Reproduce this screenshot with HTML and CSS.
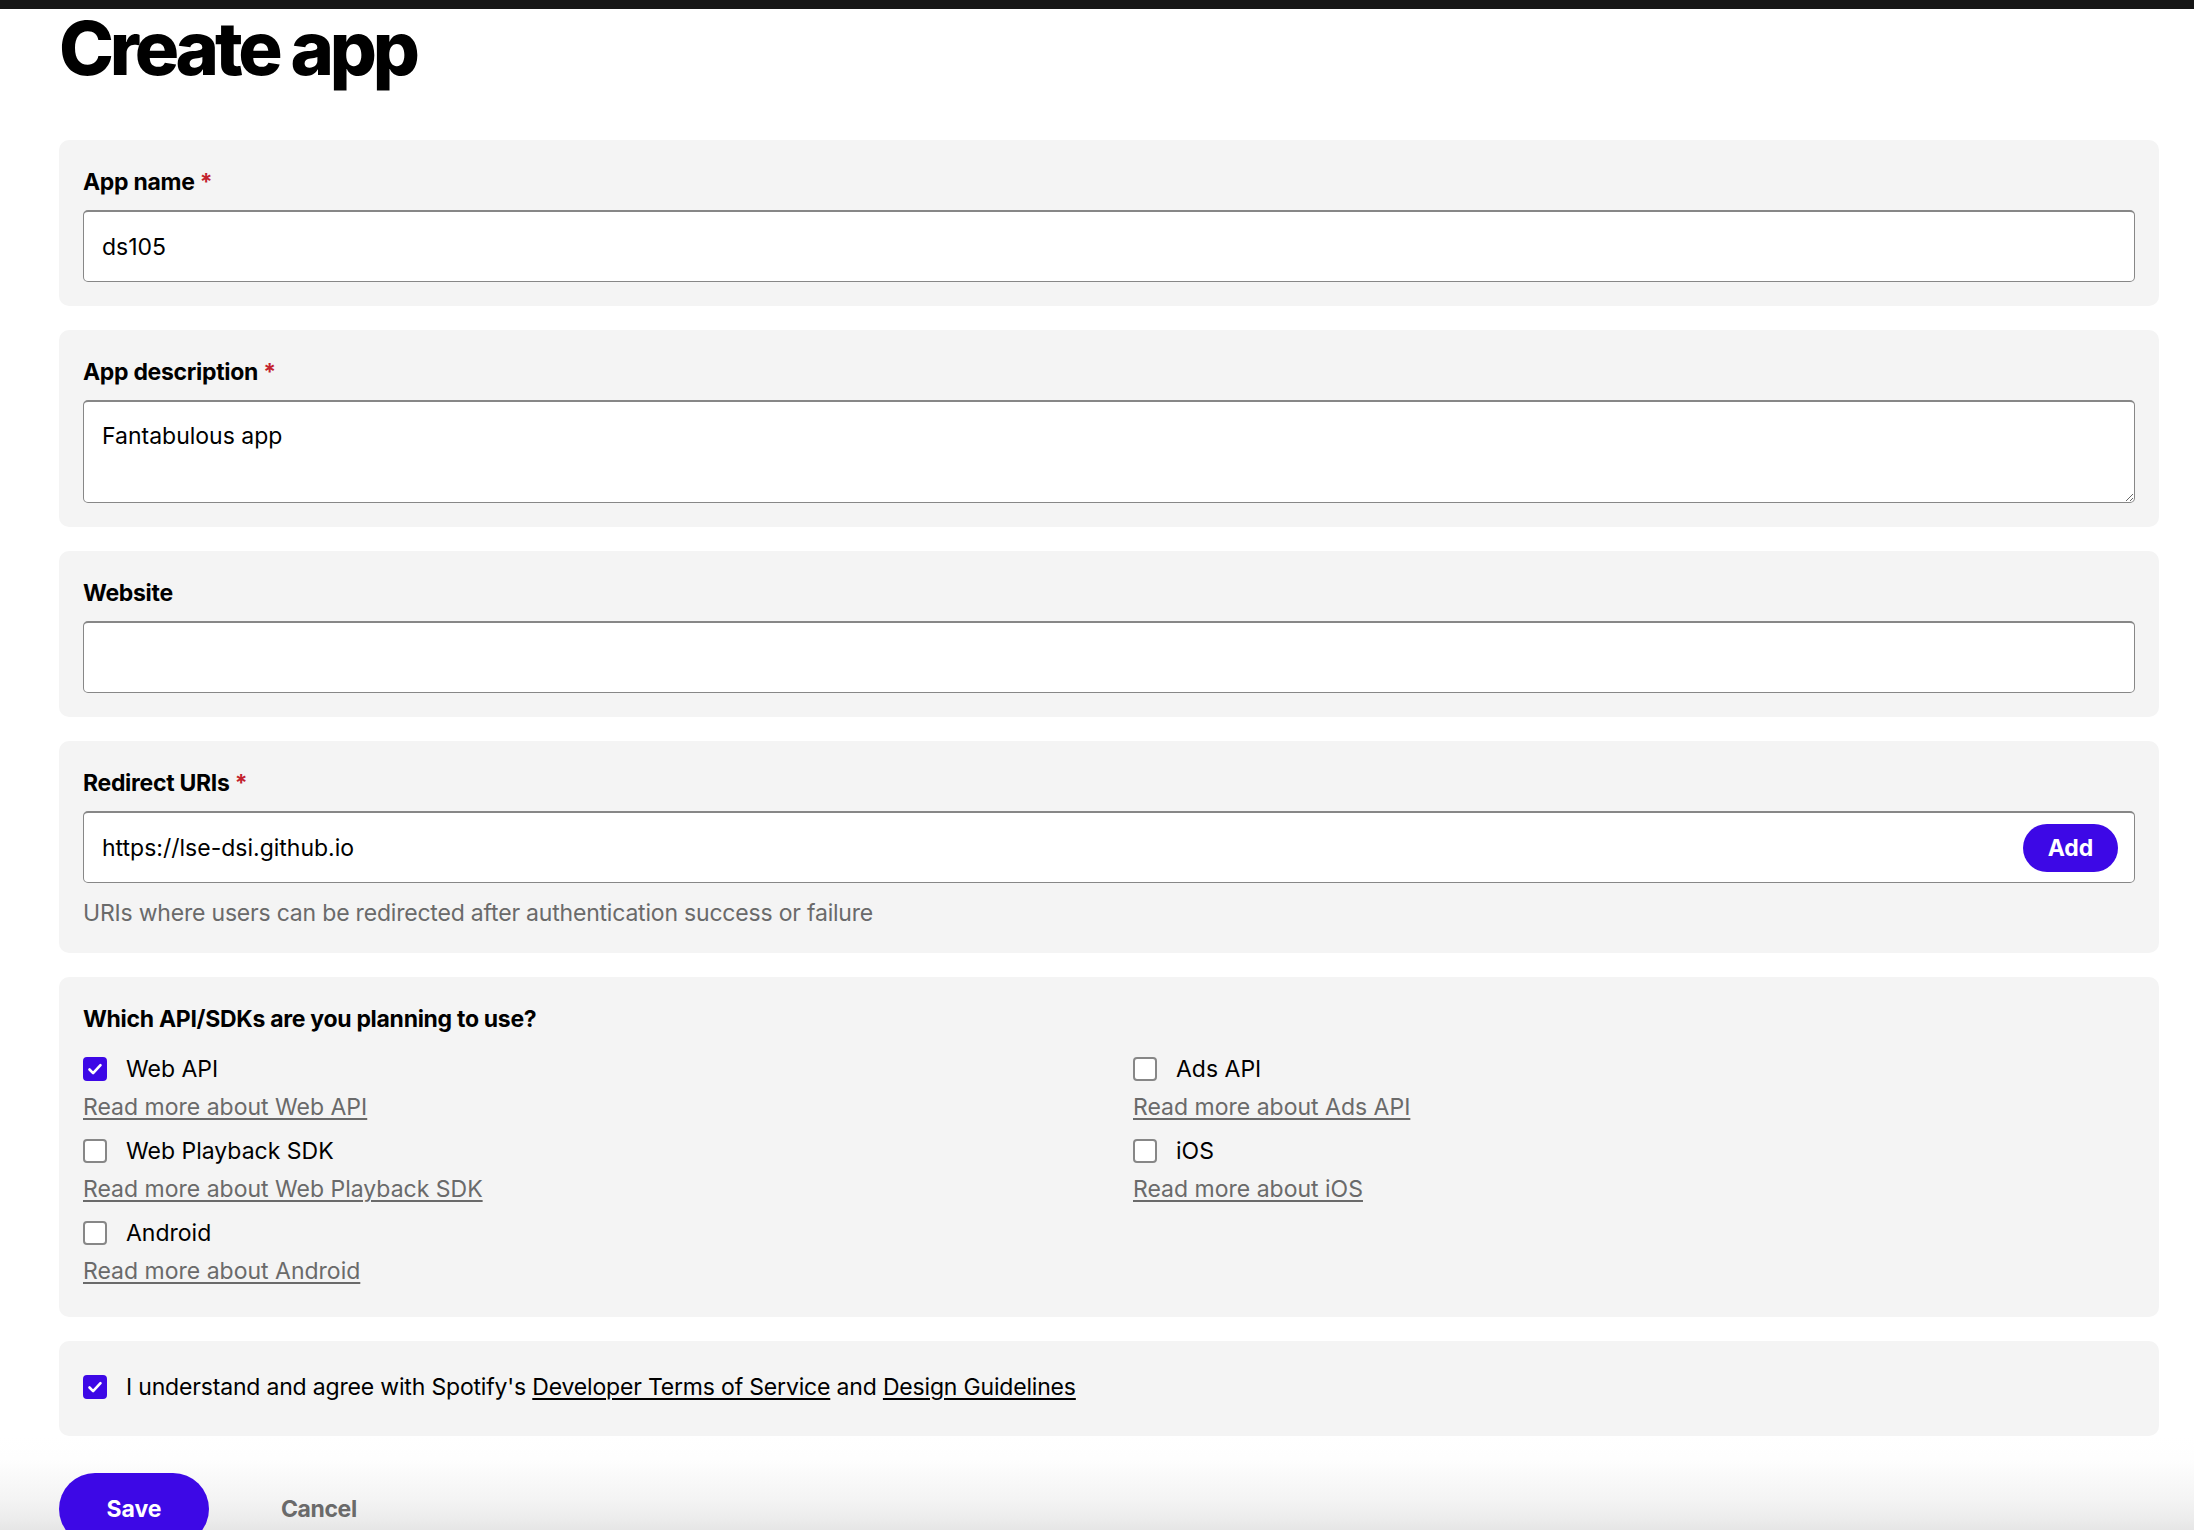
FILE: index.html
```html
<!DOCTYPE html>
<html lang="en">
<head>
<meta charset="utf-8">
<title>Create app</title>
<link rel="stylesheet" href="styles.css">
</head>
<body>
<div class="topbar"></div>
<main class="page">
  <h1 class="title">Create app</h1>
  <form class="form">
    <section class="card">
      <label class="label" for="name">App name <span class="req">*</span></label>
      <div class="field"><input id="name" class="input" type="text" value="ds105"></div>
    </section>

    <section class="card">
      <label class="label" for="desc">App description <span class="req">*</span></label>
      <textarea id="desc" class="textarea">Fantabulous app</textarea>
    </section>

    <section class="card">
      <label class="label" for="site">Website</label>
      <div class="field"><input id="site" class="input" type="text" value=""></div>
    </section>

    <section class="card">
      <label class="label" for="uri">Redirect URIs <span class="req">*</span></label>
      <div class="field"><input id="uri" class="input" type="text" value="https://lse-dsi.github.io"><button type="button" class="add">Add</button></div>
      <p class="help">URIs where users can be redirected after authentication success or failure</p>
    </section>

    <section class="card card-api">
      <p class="label label-q">Which API/SDKs are you planning to use?</p>
      <div class="opts">
        <div class="opt">
          <div class="check"><span class="box on"><svg viewBox="0 0 24 24" width="24" height="24"><path d="M6.5 12.5l3.6 3.6 7.4-8" fill="none" stroke="#fff" stroke-width="2.6" stroke-linecap="round" stroke-linejoin="round"/></svg></span><span>Web API</span></div>
          <a class="more" href="#">Read more about Web API</a>
        </div>
        <div class="opt">
          <div class="check"><span class="box"></span><span>Ads API</span></div>
          <a class="more" href="#">Read more about Ads API</a>
        </div>
        <div class="opt">
          <div class="check"><span class="box"></span><span>Web Playback SDK</span></div>
          <a class="more" href="#">Read more about Web Playback SDK</a>
        </div>
        <div class="opt">
          <div class="check"><span class="box"></span><span>iOS</span></div>
          <a class="more" href="#">Read more about iOS</a>
        </div>
        <div class="opt">
          <div class="check"><span class="box"></span><span>Android</span></div>
          <a class="more" href="#">Read more about Android</a>
        </div>
      </div>
    </section>

    <section class="card card-terms">
      <div class="check"><span class="box on"><svg viewBox="0 0 24 24" width="24" height="24"><path d="M6.5 12.5l3.6 3.6 7.4-8" fill="none" stroke="#fff" stroke-width="2.6" stroke-linecap="round" stroke-linejoin="round"/></svg></span><span class="terms-text">I understand and agree with Spotify's <a class="terms-link" href="#">Developer Terms of Service</a> and <a class="terms-link" href="#">Design Guidelines</a></span></div>
    </section>
  </form>
</main>
<footer class="actions">
  <button type="button" class="save">Save</button>
  <button type="button" class="cancel">Cancel</button>
</footer>
</body>
</html>
```

FILE: styles.css
```css
* { box-sizing: border-box; }
html, body { margin: 0; background: #fff; }
body {
  font-family: Inter, "Noto Sans", sans-serif;
  font-size: 23px;
  color: #000;
}
.topbar { height: 9px; background: #161616; }
.page { padding: 0 35px 0 59px; }
.title {
  margin: 2px 0 55px;
  font-size: 74px;
  line-height: 74px;
  font-weight: 800;
  letter-spacing: -4.2px;
}
.form { display: flex; flex-direction: column; gap: 24px; }
.card {
  background: #f4f4f4;
  border-radius: 10px;
  padding: 24px;
  display: flex;
  flex-direction: column;
}
.label {
  margin: 0 0 10px;
  font-weight: 700;
  line-height: 36px;
  letter-spacing: -0.3px;
}
.req { color: #c3222d; }
.field {
  height: 72px;
  border: 1px solid #878787;
  border-top-width: 2px;
  border-radius: 5px;
  background: #fff;
  display: flex;
  align-items: center;
  padding: 0 16px 0 18px;
}
.input {
  flex: 1;
  min-width: 0;
  border: 0;
  outline: 0;
  padding: 0;
  background: transparent;
  font: inherit;
  color: #000;
}
.textarea {
  height: 103px;
  border: 1px solid #878787;
  border-top-width: 2px;
  border-radius: 5px;
  padding: 16px 18px;
  font: inherit;
  line-height: 36px;
  color: #000;
  resize: vertical;
  outline: 0;
}
.add {
  width: 95px;
  height: 48px;
  border: 0;
  border-radius: 24px;
  background: #3d08e6;
  color: #fff;
  font: inherit;
  font-weight: 700;
  padding: 0;
}
.help {
  margin: 14px 0 0;
  line-height: 32px;
  color: #6a6a6a;
  letter-spacing: -0.2px;
}
.card-api { padding-bottom: 28px; }
.label-q { margin-bottom: 14px; }
.opts {
  display: grid;
  grid-template-columns: 1fr 1fr;
  column-gap: 48px;
  row-gap: 8px;
}
.opt { display: flex; flex-direction: column; gap: 2px; align-items: flex-start; }
.check {
  display: flex;
  align-items: center;
  gap: 19px;
  min-height: 36px;
  line-height: 36px;
}
.box {
  flex: none;
  width: 24px;
  height: 24px;
  border: 2px solid #878787;
  border-radius: 4px;
  background: #fff;
  display: flex;
  align-items: center;
  justify-content: center;
}
.box svg { display: block; flex: none; }
.box.on { background: #3d08e6; border-color: #3d08e6; }
.more {
  color: #6a6a6a;
  line-height: 36px;
  text-decoration: underline;
  text-decoration-thickness: 2px;
  text-underline-offset: 3px;
}
.card-terms { padding: 28px 24px 31px; }
.terms-text { letter-spacing: -0.18px; }
.terms-link {
  color: #000;
  text-decoration: underline;
  text-decoration-thickness: 2px;
  text-underline-offset: 3px;
}
.actions {
  display: flex;
  align-items: center;
  gap: 72px;
  padding: 37px 59px 24px;
  background: linear-gradient(#fff 0, #fefefe 23px, #f4f4f4 63px, #ececec 83px, #e6e6e6 93px, #d8d8d8 133px);
}
.save {
  width: 150px;
  height: 72px;
  border: 0;
  border-radius: 36px;
  background: #3d08e6;
  color: #fff;
  font: inherit;
  font-weight: 700;
  padding: 0;
}
.cancel {
  border: 0;
  background: transparent;
  padding: 0;
  font: inherit;
  font-weight: 700;
  color: #6a6a6a;
  letter-spacing: -0.4px;
}
```
